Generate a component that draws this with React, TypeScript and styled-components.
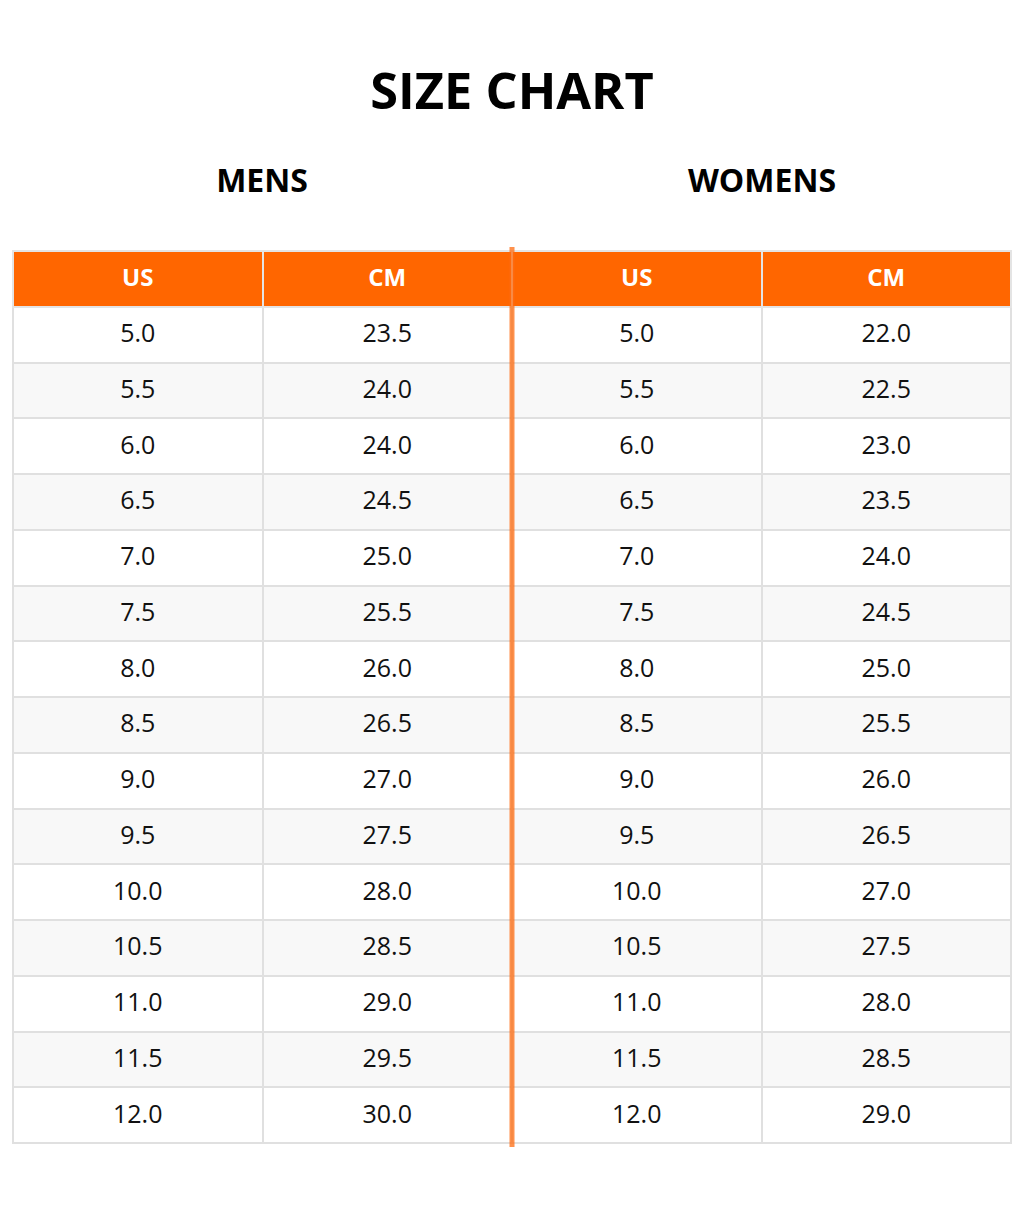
import React from "react";
import styled, { createGlobalStyle } from "styled-components";

const GlobalStyle = createGlobalStyle`
  html, body {
    margin: 0;
    padding: 0;
    background: #ffffff;
    font-family: "Open Sans", "Noto Sans", sans-serif;
    color: #111111;
  }
`;

const Page = styled.div`
  width: 1024px;
  padding: 60px 12px 60px 12px;
  box-sizing: border-box;
`;

const Title = styled.h1`
  margin: 0;
  text-align: center;
  font-size: 50.5px;
  font-weight: 700;
  line-height: 60px;
  color: #000000;
`;

const GroupRow = styled.div`
  display: grid;
  grid-template-columns: 1fr 1fr;
  margin-top: 40px;
  margin-bottom: 50px;
`;

const GroupTitle = styled.h2`
  margin: 0;
  text-align: center;
  font-size: 32px;
  font-weight: 700;
  line-height: 40px;
  color: #000000;
`;

const TableWrap = styled.div`
  position: relative;
`;

const Table = styled.table`
  width: 100%;
  border-collapse: collapse;
  table-layout: fixed;
  border: 2px solid #e0e0e0;
`;

const HeadCell = styled.th`
  background: #ff6600;
  color: #ffffff;
  font-size: 24px;
  font-weight: 700;
  text-align: center;
  border: 2px solid #e4e4e4;
  padding: 0 0 5px 0;
`;

const Row = styled.tr<{ $alt: boolean }>`
  height: 55.75px;
  background: ${(p) => (p.$alt ? "#f8f8f8" : "#ffffff")};
`;

const HeadRow = styled.tr`
  height: 55.75px;
`;

const Cell = styled.td`
  text-align: center;
  font-size: 25px;
  font-weight: 400;
  color: #111111;
  border: 2px solid #e0e0e0;
  padding: 0 0 5px 0;
`;

const Divider = styled.div`
  position: absolute;
  left: 50%;
  top: -3px;
  bottom: -3px;
  width: 5px;
  transform: translateX(-50%);
  background: rgba(255, 108, 16, 0.75);
  pointer-events: none;
`;

const mens = [
  ["5.0", "23.5"],
  ["5.5", "24.0"],
  ["6.0", "24.0"],
  ["6.5", "24.5"],
  ["7.0", "25.0"],
  ["7.5", "25.5"],
  ["8.0", "26.0"],
  ["8.5", "26.5"],
  ["9.0", "27.0"],
  ["9.5", "27.5"],
  ["10.0", "28.0"],
  ["10.5", "28.5"],
  ["11.0", "29.0"],
  ["11.5", "29.5"],
  ["12.0", "30.0"],
];

const womens = [
  ["5.0", "22.0"],
  ["5.5", "22.5"],
  ["6.0", "23.0"],
  ["6.5", "23.5"],
  ["7.0", "24.0"],
  ["7.5", "24.5"],
  ["8.0", "25.0"],
  ["8.5", "25.5"],
  ["9.0", "26.0"],
  ["9.5", "26.5"],
  ["10.0", "27.0"],
  ["10.5", "27.5"],
  ["11.0", "28.0"],
  ["11.5", "28.5"],
  ["12.0", "29.0"],
];

export default function App() {
  return (
    <>
      <GlobalStyle />
      <Page>
        <Title>SIZE CHART</Title>
        <GroupRow>
          <GroupTitle>MENS</GroupTitle>
          <GroupTitle>WOMENS</GroupTitle>
        </GroupRow>
        <TableWrap>
          <Table>
            <thead>
              <HeadRow>
                <HeadCell>US</HeadCell>
                <HeadCell>CM</HeadCell>
                <HeadCell>US</HeadCell>
                <HeadCell>CM</HeadCell>
              </HeadRow>
            </thead>
            <tbody>
              {mens.map((m, i) => (
                <Row key={i} $alt={i % 2 === 1}>
                  <Cell>{m[0]}</Cell>
                  <Cell>{m[1]}</Cell>
                  <Cell>{womens[i][0]}</Cell>
                  <Cell>{womens[i][1]}</Cell>
                </Row>
              ))}
            </tbody>
          </Table>
          <Divider />
        </TableWrap>
      </Page>
    </>
  );
}
